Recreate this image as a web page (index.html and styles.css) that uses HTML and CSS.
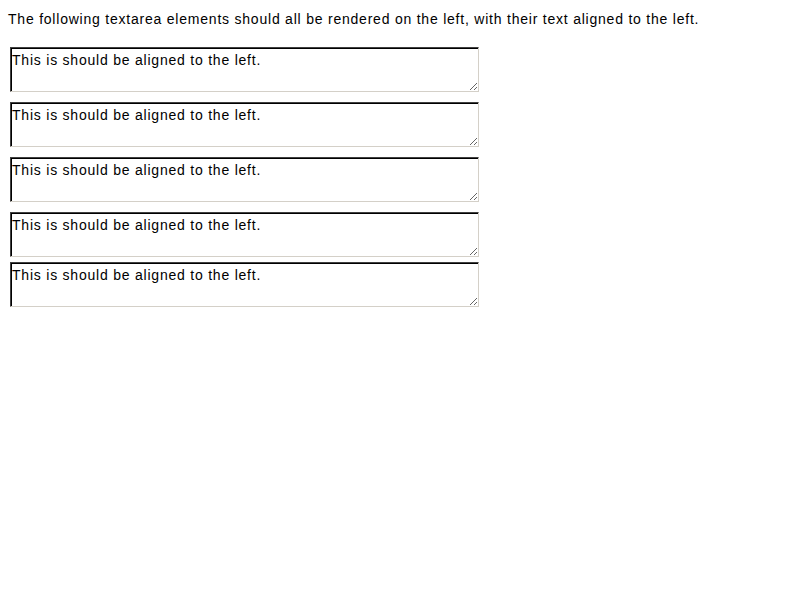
FILE: index.html
```html
<!DOCTYPE html>
<html>
<head>
<meta charset="utf-8">
<link rel="stylesheet" href="styles.css">
</head>
<body>
<p class="intro">The following textarea elements should all be rendered on the left, with their text aligned to the left.</p>
<div class="list">
<textarea class="ta">This is should be aligned to the left.</textarea>
<textarea class="ta">This is should be aligned to the left.</textarea>
<textarea class="ta">This is should be aligned to the left.</textarea>
<textarea class="ta ta-tight">This is should be aligned to the left.</textarea>
<textarea class="ta">This is should be aligned to the left.</textarea>
</div>
</body>
</html>
```
FILE: styles.css
```css
html, body {
  margin: 0;
  padding: 0;
  background: #fff;
}
body {
  font-family: "Liberation Sans", Arial, sans-serif;
  font-size: 14px;
  letter-spacing: 0.78px;
  color: #000;
}
.intro {
  margin: 0;
  padding: 11px 8px 0;
  line-height: 16px;
}
.list {
  display: flex;
  flex-direction: column;
  align-items: flex-start;
  padding: 20px 0 0 10px;
}
.ta {
  display: block;
  box-sizing: border-box;
  width: 469px;
  height: 45px;
  margin: 0 0 10px 0;
  padding: 4px 0 0 1px;
  font-family: "Liberation Sans", Arial, sans-serif;
  font-size: 14px;
  letter-spacing: 0.78px;
  line-height: 16px;
  color: #000;
  background: #fff;
  text-align: left;
  border-style: solid;
  border-width: 1px;
  border-color: #404040 #d4d0c8 #d4d0c8 #404040;
  box-shadow: inset 1px 1px 0 #000, inset -1px -1px 0 #fff;
  outline: none;
}
.ta-tight {
  margin-bottom: 5px;
}
```
